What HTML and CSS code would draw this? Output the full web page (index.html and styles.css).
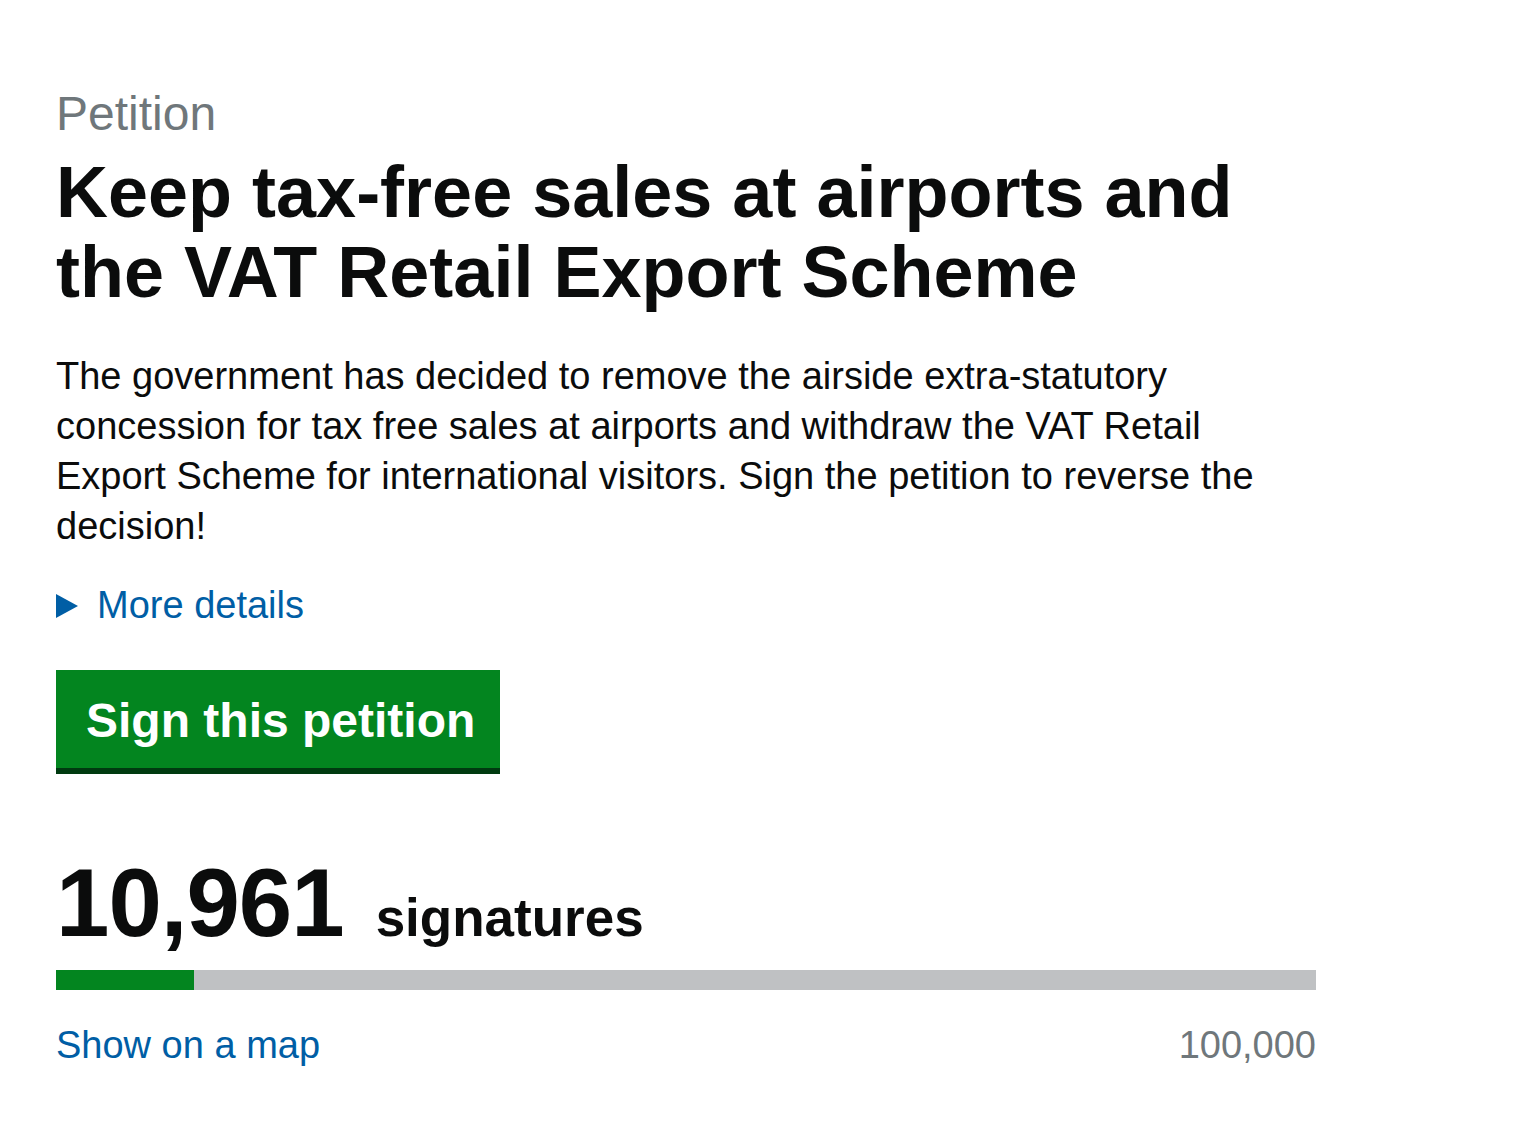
FILE: index.html
```html
<!DOCTYPE html>
<html lang="en">
<head>
    <meta charset="UTF-8">
    <meta name="viewport" content="width=device-width, initial-scale=1.0">
    <title>Petition: Keep tax-free sales at airports and the VAT Retail Export Scheme</title>
    <link rel="stylesheet" href="styles.css">
</head>
<body>
    <main id="petition">
        <span class="caption">Petition</span>
        <h1 class="petition-title">Keep tax-free sales at airports and the VAT Retail Export Scheme</h1>

        <p class="action">The government has decided to remove the airside extra-statutory concession for tax free sales at airports and withdraw the VAT Retail Export Scheme for international visitors. Sign the petition to reverse the decision!</p>

        <div class="details">
            <a href="#" class="summary">
                <svg class="arrow" width="22" height="24" viewBox="0 0 22 24"><polygon points="0,0 22,12 0,24" fill="#005ea5"/></svg>
                <span>More details</span>
            </a>
        </div>

        <a href="#" class="button">Sign this petition</a>

        <div class="signature-count">
            <p class="count"><span class="number">10,961</span><span class="label">signatures</span></p>
            <div class="progress">
                <div class="progress-fill" style="width: 10.961%"></div>
            </div>
            <div class="count-footer">
                <a href="#" class="map-link">Show on a map</a>
                <span class="target">100,000</span>
            </div>
        </div>
    </main>
</body>
</html>
```

FILE: styles.css
```css
body {
    margin: 0;
    background: #fff;
    color: #0b0c0c;
    font-family: "Liberation Sans", Arial, Helvetica, sans-serif;
}

#petition {
    width: 1260px;
    padding: 86px 0 0 56px;
}

.caption {
    display: block;
    font-size: 48px;
    line-height: 56px;
    color: #6f777b;
}

.petition-title {
    margin: 10px 0 0 0;
    font-size: 72px;
    line-height: 80px;
    font-weight: bold;
}

.action {
    margin: 39px 0 0 0;
    font-size: 38px;
    line-height: 50px;
}

.details {
    margin-top: 29px;
}

.summary {
    display: flex;
    align-items: center;
    gap: 19px;
    font-size: 38px;
    line-height: 50px;
    color: #005ea5;
    text-decoration: none;
}

.arrow {
    display: block;
    margin-top: 1px;
}

.button {
    display: inline-block;
    margin-top: 40px;
    padding: 23px 25px 19px 30px;
    background: #03851f;
    box-shadow: 0 6px 0 #003a10;
    color: #fff;
    font-size: 48px;
    line-height: 56px;
    font-weight: bold;
    text-decoration: none;
}

.signature-count {
    margin-top: 85px;
}

.count {
    margin: 0;
    font-size: 96px;
    line-height: 100px;
    font-weight: bold;
}

.number {
    letter-spacing: -1px;
}

.label {
    margin-left: 32px;
    font-size: 53px;
    line-height: 1;
}

.progress {
    margin-top: 17px;
    height: 20px;
    background: #bfc1c3;
}

.progress-fill {
    height: 100%;
    background: #03851f;
}

.count-footer {
    display: flex;
    justify-content: space-between;
    margin-top: 30px;
    font-size: 38px;
    line-height: 50px;
}

.map-link {
    color: #005ea5;
    text-decoration: none;
}

.target {
    color: #6f777b;
}
```
